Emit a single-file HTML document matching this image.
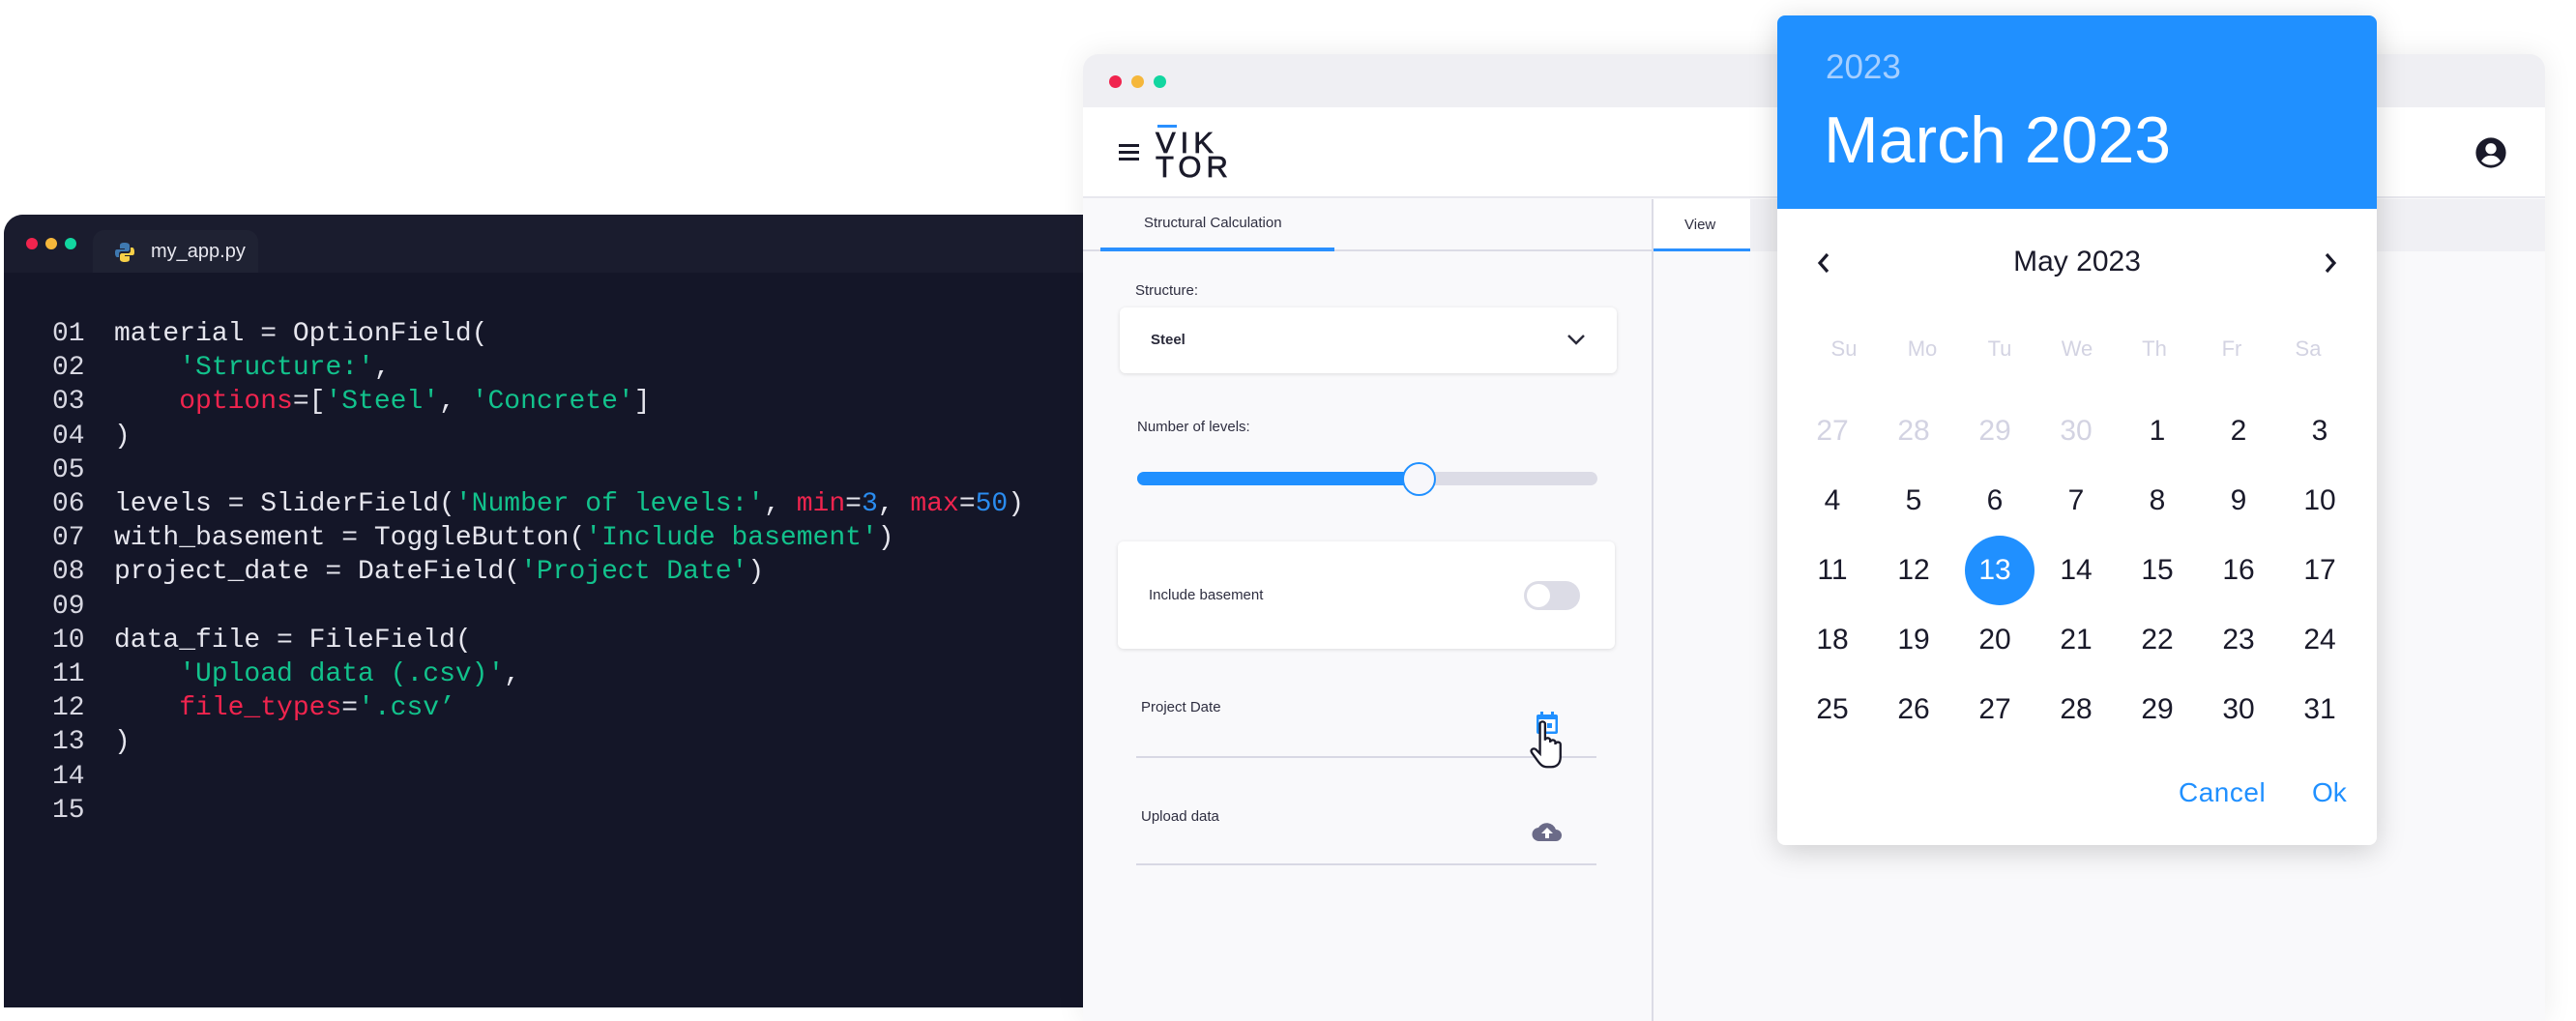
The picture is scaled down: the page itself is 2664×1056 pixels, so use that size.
<!DOCTYPE html>
<html><head><meta charset="utf-8"><style>
*{margin:0;padding:0;box-sizing:border-box}
body{width:2664px;height:1030px;background:#fff;position:relative;overflow:hidden;font-family:"Liberation Sans",sans-serif}
.abs{position:absolute}
#ed{left:4px;top:222px;width:1200px;height:820px;background:#141628;border-radius:20px 0 0 0;overflow:hidden}
#edbar{left:0;top:0;width:100%;height:60px;background:#1a1c2e}
.dot{position:absolute;border-radius:50%}
#tab{left:92px;top:16px;width:171px;height:44px;background:#1f2233;border-radius:12px 12px 0 0;color:#e8e8f0;font-size:20px;line-height:44px;padding-left:60px}
.code{position:absolute;font-family:"Liberation Mono",monospace;font-size:28px;color:#e6e6ee;white-space:pre;line-height:35.2px}
.g{color:#12c28c}.r{color:#f0244e}.b{color:#2a8cf0}
#br{left:1120px;top:56px;width:1512px;height:1000px;background:#f9f9fb;border-radius:16px 16px 0 0;box-shadow:0 0 30px rgba(0,0,0,.08);overflow:hidden}
.lbl{position:absolute;font-size:15px;color:#2e2e40}
#cal{left:1838px;top:16px;width:620px;height:858px;background:#fff;border-radius:8px;box-shadow:0 6px 30px rgba(0,0,0,.18);overflow:hidden}
.wd{position:absolute;width:80px;text-align:center;font-size:22px;color:#d3d3e2;top:332px}
.d{position:absolute;width:84px;text-align:center;font-size:30px;color:#1a1a2a;line-height:40px}
.d.o{color:#d3d3e2}
</style></head><body>
<div id="ed" class="abs">
 <div id="edbar" class="abs"></div>
 <div class="dot" style="left:23px;top:24px;width:12px;height:12px;background:#f0244e"></div>
 <div class="dot" style="left:43px;top:24px;width:12px;height:12px;background:#f5b73b"></div>
 <div class="dot" style="left:63px;top:24px;width:12px;height:12px;background:#12d6a0"></div>
 <div id="tab" class="abs">my_app.py
  <svg style="position:absolute;left:22px;top:12px" width="22" height="22" viewBox="0 0 22 22"><path d="M11 1c-5 0-5 2-5 3v3h5v1H3C1 8 1 10 1 12s1 4 2 4h2v-3c0-2 1-3 3-3h6c1 0 2-1 2-2V4c0-2-2-3-5-3z" fill="#3f79b0"/><path d="M11 21c5 0 5-2 5-3v-3h-5v-1h8c2 0 2-2 2-4s-1-4-2-4h-2v3c0 2-1 3-3 3H8c-1 0-2 1-2 2v4c0 2 2 3 5 3z" fill="#f7d048"/></svg></div>
 <div class="code" style="left:50px;top:106px;color:#d8d8e2">01
02
03
04
05
06
07
08
09
10
11
12
13
14
15</div>
 <div class="code" style="left:114px;top:106px">material = OptionField(
    <span class="g">'Structure:'</span>,
    <span class="r">options</span>=[<span class="g">'Steel'</span>, <span class="g">'Concrete'</span>]
)

levels = SliderField(<span class="g">'Number of levels:'</span>, <span class="r">min</span>=<span class="b">3</span>, <span class="r">max</span>=<span class="b">50</span>)
with_basement = ToggleButton(<span class="g">'Include basement'</span>)
project_date = DateField(<span class="g">'Project Date'</span>)

data_file = FileField(
    <span class="g">'Upload data (.csv)'</span>,
    <span class="r">file_types</span>=<span class="g">'.csv’</span>
)</div>
</div>

<div id="br" class="abs">
 <div class="abs" style="left:0;top:0;width:100%;height:55px;background:#efeff3"></div>
 <div class="dot" style="left:27px;top:22px;width:13px;height:13px;background:#f0244e"></div>
 <div class="dot" style="left:50px;top:22px;width:13px;height:13px;background:#f5b73b"></div>
 <div class="dot" style="left:73px;top:22px;width:13px;height:13px;background:#12d6a0"></div>
 <div class="abs" style="left:0;top:55px;width:100%;height:94px;background:#fff;border-bottom:2px solid #e8e8ee"></div>
 <div class="abs" style="left:37px;top:93px;width:21px;height:2.5px;background:#1a1a2a;box-shadow:0 7px 0 #1a1a2a,0 14px 0 #1a1a2a"></div>
 <div class="abs" style="left:77px;top:73px;width:20px;height:3px;background:#2a90ff"></div>
 <div class="abs" style="left:75px;top:79px;font-size:31px;line-height:25px;letter-spacing:5px;color:#1a1a2a;-webkit-text-stroke:0.7px #1a1a2a">VIK<br>TOR</div>
 <svg class="abs" style="left:1439px;top:85px" width="34" height="34" viewBox="0 0 24 24"><circle cx="12" cy="12" r="11" fill="#1a1a2a"/><circle cx="12" cy="9" r="4" fill="#fff"/><path d="M5 18c2-3 4-4 7-4s5 1 7 4c-2 2-4 3-7 3s-5-1-7-3z" fill="#fff"/></svg>
 <div class="abs" style="left:0;top:150px;width:589px;height:54px;background:#f9f9fb;border-bottom:2px solid #dcdce6"></div>
 <div class="abs" style="left:690px;top:150px;width:822px;height:54px;background:#f0f0f4"></div>
 <div class="abs" style="left:589px;top:150px;width:101px;height:54px;background:#fff"></div>
 <div class="abs" style="left:588px;top:150px;width:2px;height:850px;background:#dcdce6"></div>
 <div class="lbl" style="left:63px;top:166px">Structural Calculation</div>
 <div class="abs" style="left:18px;top:200px;width:242px;height:4px;background:#2a90ff"></div>
 <div class="lbl" style="left:622px;top:168px">View</div>
 <div class="abs" style="left:590px;top:201px;width:100px;height:3px;background:#2a90ff"></div>
 <div class="lbl" style="left:54px;top:236px">Structure:</div>
 <div class="abs" style="left:38px;top:262px;width:514px;height:68px;background:#fff;border-radius:6px;box-shadow:0 1px 4px rgba(0,0,0,.12)"></div>
 <div class="lbl" style="left:70px;top:287px;font-weight:bold;color:#2a2a3a">Steel</div>
 <svg class="abs" style="left:500px;top:289px" width="20" height="12" viewBox="0 0 20 12"><path d="M2 2l8 8 8-8" stroke="#2a2a3a" stroke-width="2.5" fill="none"/></svg>
 <div class="lbl" style="left:56px;top:377px">Number of levels:</div>
 <div class="abs" style="left:56px;top:432px;width:476px;height:14px;background:#dcdce6;border-radius:7px"></div>
 <div class="abs" style="left:56px;top:432px;width:300px;height:14px;background:#2090ff;border-radius:7px"></div>
 <div class="abs" style="left:330px;top:422px;width:35px;height:35px;background:#f7f7fb;border:2.5px solid #2090ff;border-radius:50%"></div>
 <div class="abs" style="left:36px;top:504px;width:514px;height:111px;background:#fff;border-radius:6px;box-shadow:0 1px 4px rgba(0,0,0,.12)"></div>
 <div class="lbl" style="left:68px;top:551px">Include basement</div>
 <div class="abs" style="left:456px;top:545px;width:58px;height:30px;background:#dcdce6;border-radius:15px"></div>
 <div class="abs" style="left:459px;top:548px;width:24px;height:24px;background:#fff;border-radius:50%"></div>
 <div class="lbl" style="left:60px;top:667px">Project Date</div>
 <div class="abs" style="left:55px;top:726px;width:476px;height:2px;background:#d8d8e4"></div>
 <svg class="abs" style="left:468px;top:680px" width="24" height="24" viewBox="0 0 24 24"><rect x="1" y="3" width="22" height="20" rx="2" fill="#2090ff"/><rect x="3.5" y="8" width="17" height="12.5" fill="#fff"/><rect x="5" y="0" width="3" height="5" fill="#2090ff"/><rect x="16" y="0" width="3" height="5" fill="#2090ff"/><rect x="12" y="12" width="5" height="5" fill="#2090ff"/></svg>
 <svg class="abs" style="left:462px;top:688px" width="36" height="54" viewBox="0 0 34 50"><path d="M10 4c0-3 5-3 5 0v16c0-3 5-3 5 0v2c0-3 5-3 5 0v2c0-3 5-3 5 0v12c0 6-3 10-9 10h-4c-5 0-7-3-10-7l-5-7c-2-3 2-5 4-3l4 4z" fill="#fff" stroke="#1a1a2a" stroke-width="2.2"/></svg>
 <div class="lbl" style="left:60px;top:780px">Upload data</div>
 <div class="abs" style="left:55px;top:837px;width:476px;height:2px;background:#d8d8e4"></div>
 <svg class="abs" style="left:464px;top:794px" width="32" height="20" viewBox="0 0 32 20"><path d="M8 20a7 7 0 0 1-1-14 10 10 0 0 1 18 2 6 6 0 0 1 0 12z" fill="#6b6b88"/><path d="M16 6l-6 6h4v5h4v-5h4z" fill="#fff"/></svg>
</div>

<div id="cal" class="abs">
 <div class="abs" style="left:0;top:0;width:620px;height:200px;background:#2090ff"></div>
 <div class="abs" style="left:50px;top:34px;font-size:35px;color:#a6cfff">2023</div>
 <div class="abs" style="left:48px;top:90px;font-size:68px;color:#fff">March 2023</div>
 <svg class="abs" style="left:40px;top:244px" width="16" height="24" viewBox="0 0 16 24"><path d="M12 3l-8 9 8 9" stroke="#1a1a2a" stroke-width="3.2" fill="none"/></svg>
 <svg class="abs" style="left:564px;top:244px" width="16" height="24" viewBox="0 0 16 24"><path d="M4 3l8 9-8 9" stroke="#1a1a2a" stroke-width="3.2" fill="none"/></svg>
 <div class="abs" style="left:0;top:238px;width:620px;text-align:center;font-size:30px;color:#1a1a2a">May 2023</div>
 <div class="wd" style="left:29px">Su</div><div class="wd" style="left:110px">Mo</div><div class="wd" style="left:190px">Tu</div><div class="wd" style="left:270px">We</div><div class="wd" style="left:350px">Th</div><div class="wd" style="left:430px">Fr</div><div class="wd" style="left:509px">Sa</div>
 <div class="abs" style="left:194px;top:538px;width:72px;height:72px;border-radius:50%;background:#2090ff"></div>
 <div id="days"></div>
 <div class="abs" style="left:415px;top:788px;font-size:28px;color:#2090ff;letter-spacing:.5px">Cancel</div>
 <div class="abs" style="left:553px;top:788px;font-size:28px;color:#2090ff">Ok</div>
</div>
<script>
var rows=[410,482,554,626,698],h='',n=1;
var first=[27,28,29,30];
for(var r=0;r<5;r++)for(var c=0;c<7;c++){var t,cl='d';
if(r==0&&c<4){t=first[c];cl+=' o'}else{t=n++}
var st=(t==13&&r==2)?';color:#fff':'';
h+='<div class="'+cl+'" style="left:'+(15+84*c)+'px;top:'+rows[r]+'px'+st+'">'+t+'</div>'}
document.getElementById('days').innerHTML=h;
</script>
</body></html>
